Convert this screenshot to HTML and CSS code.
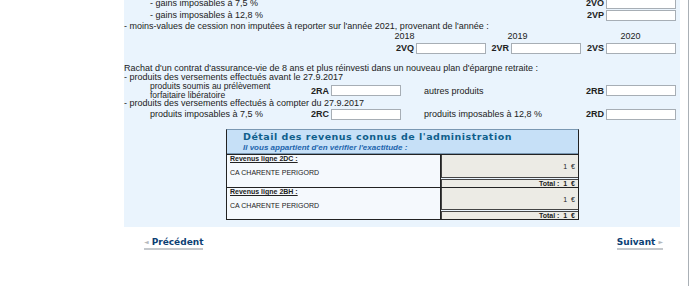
FILE: index.html
```html
<!DOCTYPE html>
<html lang="fr">
<head>
    <meta charset="UTF-8">
    <title>Revenus de capitaux mobiliers</title>
    <link rel="stylesheet" href="styles.css">
</head>
<body>
    <div class="page">
        <div class="panel">
            <div class="row row-field">
                <span class="sub">- gains imposables à 7,5 %</span>
                <span class="field"><b class="code">2VO</b><input type="text"></span>
            </div>
            <div class="row row-field">
                <span class="sub">- gains imposables à 12,8 %</span>
                <span class="field"><b class="code">2VP</b><input type="text"></span>
            </div>
            <div class="row row-text first">- moins-values de cession non imputées à reporter sur l'année 2021, provenant de l'année :</div>
            <div class="row years">
                <span class="year">2018</span>
                <span class="year">2019</span>
                <span class="year">2020</span>
            </div>
            <div class="row year-fields">
                <span class="field"><b class="code">2VQ</b><input type="text"></span>
                <span class="field"><b class="code">2VR</b><input type="text"></span>
                <span class="field"><b class="code">2VS</b><input type="text"></span>
            </div>

            <div class="row row-text rachat">Rachat d'un contrat d'assurance-vie de 8 ans et plus réinvesti dans un nouveau plan d'épargne retraite :</div>
            <div class="row row-text">- produits des versements effectués avant le 27.9.2017</div>
            <div class="row pair tall">
                <span class="pair-label small">produits soumis au prélèvement<br>forfaitaire libératoire</span>
                <span class="field"><b class="code">2RA</b><input type="text"></span>
                <span class="pair-label2">autres produits</span>
                <span class="field"><b class="code">2RB</b><input type="text"></span>
            </div>
            <div class="row row-text">- produits des versements effectués à compter du 27.9.2017</div>
            <div class="row pair">
                <span class="pair-label">produits imposables à 7,5 %</span>
                <span class="field"><b class="code">2RC</b><input type="text"></span>
                <span class="pair-label2">produits imposables à 12,8 %</span>
                <span class="field"><b class="code">2RD</b><input type="text"></span>
            </div>

            <div class="detail">
                <div class="detail-head">
                    <div class="detail-title">Détail des revenus connus de l'administration</div>
                    <div class="detail-sub">Il vous appartient d'en vérifier l'exactitude :</div>
                </div>
                <div class="detail-row">
                    <div class="detail-left">
                        <div class="ligne">Revenus ligne 2DC :</div>
                        <div class="orga">CA CHARENTE PERIGORD</div>
                    </div>
                    <div class="detail-right">
                        <div class="amount">1 &nbsp;€</div>
                        <div class="total">Total : &nbsp;1 &nbsp;€</div>
                    </div>
                </div>
                <div class="detail-row">
                    <div class="detail-left">
                        <div class="ligne">Revenus ligne 2BH :</div>
                        <div class="orga">CA CHARENTE PERIGORD</div>
                    </div>
                    <div class="detail-right">
                        <div class="amount">1 &nbsp;€</div>
                        <div class="total">Total : &nbsp;1 &nbsp;€</div>
                    </div>
                </div>
            </div>
        </div>

        <div class="nav">
            <a href="#" class="nav-link"><span class="arrow prev">&#9668;</span>Précédent</a>
            <a href="#" class="nav-link">Suivant<span class="arrow next">&#9658;</span></a>
        </div>
    </div>
</body>
</html>
```

FILE: styles.css
```css
body {
    margin: 0;
    padding: 0;
    font-family: "Liberation Sans", Arial, sans-serif;
    font-size: 9px;
    color: #222;
    background-color: #fff;
}
.page {
    width: 688px;
    height: 286px;
    border-right: 1px solid #aab0b6;
    overflow: hidden;
}
.panel {
    margin-left: 124px;
    margin-top: -3px;
    width: 556px;
    background-color: #eaf4fd;
    padding-bottom: 7px;
}
.row {
    display: flex;
    align-items: center;
    padding-right: 4px;
}
.row-field {
    height: 12px;
    justify-content: space-between;
}
.sub {
    padding-left: 26px;
}
.row-text {
    height: 9px;
    line-height: 9px;
}
.row-text.first {
    padding-top: 1px;
}
.years {
    justify-content: flex-end;
    height: 8px;
    line-height: 8px;
    padding-top: 1px;
}
.year {
    width: 91px;
    padding-left: 22px;
    text-align: center;
}
.year-fields {
    justify-content: flex-end;
    height: 12px;
    margin-top: 2px;
    gap: 1px;
}
.field {
    display: flex;
    align-items: center;
}
.code {
    width: 22px;
    text-align: right;
    margin-right: 2px;
    font-size: 9px;
}
input[type="text"] {
    box-sizing: border-box;
    width: 70px;
    height: 11px;
    margin: 0;
    padding: 0;
    border: 1px solid #a7aeb5;
    background-color: #fff;
}
.rachat {
    margin-top: 10px;
}
.pair {
    height: 12px;
    padding-left: 26px;
}
.pair.tall {
    height: 17px;
}
.pair-label {
    width: 158px;
    line-height: 8px;
}
.pair-label.small {
    font-size: 8.5px;
    line-height: 8.5px;
}
.pair-label2 {
    width: 159px;
    padding-left: 23px;
}
.detail {
    margin: 9px 0 0 102px;
    width: 351px;
    border: 1px solid #222;
    border-top-color: #7a98b3;
}
.detail-head {
    background-color: #c6e0f7;
    padding: 1px 0 1px 16px;
    border-bottom: 1px solid #7a98b3;
}
.detail-title {
    font-family: "DejaVu Sans", Verdana, sans-serif;
    font-size: 9.5px;
    font-weight: bold;
    color: #0f5f8c;
    line-height: 12px;
    letter-spacing: 0.5px;
}
.detail-sub {
    font-size: 8px;
    font-weight: bold;
    font-style: italic;
    color: #1c64ad;
    line-height: 9px;
}
.detail-row {
    display: flex;
    border-top: 1px solid #222;
}
.detail-left {
    width: 210px;
    background-color: #f5f9fd;
    border-right: 1px solid #222;
    padding-left: 3px;
    font-size: 7px;
}
.ligne {
    font-weight: bold;
    text-decoration: underline;
    line-height: 8px;
}
.orga {
    margin-top: 6px;
}
.detail-right {
    flex: 1;
    font-size: 7px;
    text-align: right;
}
.amount {
    height: 14px;
    padding: 8px 3px 0 0;
    background-color: #ecebe5;
    border: 1px solid #444;
    border-top: none;
    border-right: none;
}
.total {
    margin-top: 1px;
    height: 7px;
    line-height: 7px;
    padding-right: 3px;
    font-weight: bold;
    background-color: #ecebe5;
    border-top: 1px solid #444;
    border-left: 1px solid #444;
}
.detail-row + .detail-row .amount {
    height: 13px;
}
.nav {
    display: flex;
    justify-content: space-between;
    margin: 10px 0 0 144px;
    width: 519px;
}
.nav-link {
    font-family: "DejaVu Sans", Verdana, sans-serif;
    font-size: 9px;
    font-weight: bold;
    color: #0c3f74;
    text-decoration: none;
    border-bottom: 2px solid #c4c8cc;
    padding-bottom: 1px;
}
.arrow {
    color: #b4b8bc;
    font-size: 6px;
    vertical-align: 1px;
}
.arrow.prev {
    margin-right: 3px;
}
.arrow.next {
    margin-left: 3px;
}
```
